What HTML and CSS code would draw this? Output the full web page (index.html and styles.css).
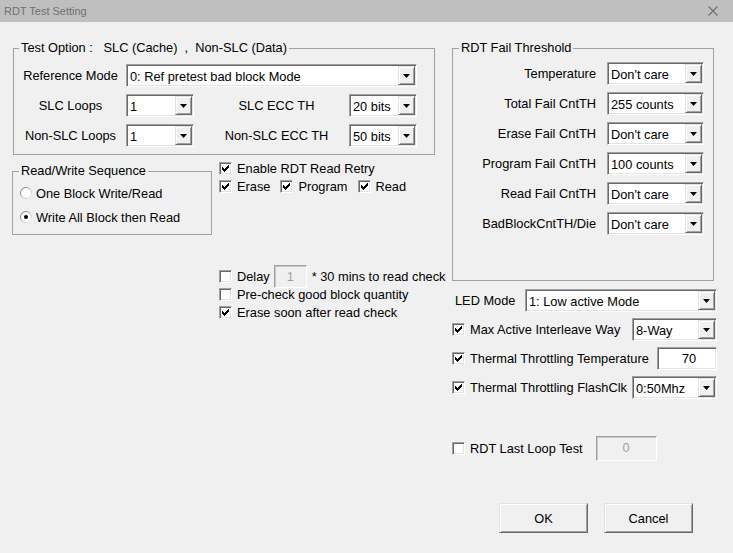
FILE: index.html
```html
<!DOCTYPE html>
<html>
<head>
<meta charset="utf-8">
<title>RDT Test Setting</title>
<link rel="stylesheet" href="styles.css">
</head>
<body>
<div class="titlebar">
  <span class="title">RDT Test Setting</span>
  <svg class="close" width="10" height="10" viewBox="0 0 10 10"><path d="M0.5 0.5L9.5 9.5M9.5 0.5L0.5 9.5" stroke="#6e6e6e" stroke-width="1.1" fill="none"/></svg>
</div>
<div class="body">
  <div class="left">
    <fieldset class="group testopt">
      <legend>Test Option :   SLC (Cache)  ,  Non-SLC (Data)</legend>
      <div class="opt-grid">
        <span class="lbl">Reference Mode</span>
        <div class="combo wide"><span class="val">0: Ref pretest bad block Mode</span><span class="dd"><svg width="7" height="4" viewBox="0 0 7 4"><path d="M0 0h7L3.5 4z" fill="#000"/></svg></span></div>
        <span class="lbl">SLC Loops</span>
        <div class="combo"><span class="val">1</span><span class="dd"><svg width="7" height="4" viewBox="0 0 7 4"><path d="M0 0h7L3.5 4z" fill="#000"/></svg></span></div>
        <span class="lbl lbl2">SLC ECC TH</span>
        <div class="combo"><span class="val">20 bits</span><span class="dd"><svg width="7" height="4" viewBox="0 0 7 4"><path d="M0 0h7L3.5 4z" fill="#000"/></svg></span></div>
        <span class="lbl">Non-SLC Loops</span>
        <div class="combo"><span class="val">1</span><span class="dd"><svg width="7" height="4" viewBox="0 0 7 4"><path d="M0 0h7L3.5 4z" fill="#000"/></svg></span></div>
        <span class="lbl lbl2">Non-SLC ECC TH</span>
        <div class="combo"><span class="val">50 bits</span><span class="dd"><svg width="7" height="4" viewBox="0 0 7 4"><path d="M0 0h7L3.5 4z" fill="#000"/></svg></span></div>
      </div>
    </fieldset>
    <div class="row2">
      <fieldset class="group rw">
        <legend>Read/Write Sequence</legend>
        <div class="radio">
          <svg width="12" height="12" viewBox="0 0 12 12"><defs><linearGradient id="rg" x1="0" y1="0" x2="1" y2="1"><stop offset="0" stop-color="#6a6a6a"/><stop offset="0.5" stop-color="#b0b0b0"/><stop offset="1" stop-color="#ffffff"/></linearGradient></defs><circle cx="6" cy="6" r="5.5" fill="#fff" stroke="url(#rg)" stroke-width="1"/></svg>
          <span>One Block Write/Read</span>
        </div>
        <div class="radio">
          <svg width="12" height="12" viewBox="0 0 12 12"><circle cx="6" cy="6" r="5.5" fill="#fff" stroke="url(#rg)" stroke-width="1"/><circle cx="6" cy="6" r="2" fill="#000"/></svg>
          <span>Write All Block then Read</span>
        </div>
      </fieldset>
      <div class="checks">
        <div class="chk"><span class="box"><svg width="7" height="7" viewBox="0 0 7 7" shape-rendering="crispEdges"><path d="M6 0h1v1h-1zM5 1h2v1h-2zM0 2h1v1h-1zM4 2h3v1h-3zM0 3h2v1h-2zM3 3h3v1h-3zM0 4h5v1h-5zM1 5h3v1h-3zM2 6h1v1h-1z" fill="#000"/></svg></span>Enable RDT Read Retry</div>
        <div class="chk-line">
          <div class="chk item"><span class="box"><svg width="7" height="7" viewBox="0 0 7 7" shape-rendering="crispEdges"><path d="M6 0h1v1h-1zM5 1h2v1h-2zM0 2h1v1h-1zM4 2h3v1h-3zM0 3h2v1h-2zM3 3h3v1h-3zM0 4h5v1h-5zM1 5h3v1h-3zM2 6h1v1h-1z" fill="#000"/></svg></span>Erase</div>
          <div class="chk item"><span class="box"><svg width="7" height="7" viewBox="0 0 7 7" shape-rendering="crispEdges"><path d="M6 0h1v1h-1zM5 1h2v1h-2zM0 2h1v1h-1zM4 2h3v1h-3zM0 3h2v1h-2zM3 3h3v1h-3zM0 4h5v1h-5zM1 5h3v1h-3zM2 6h1v1h-1z" fill="#000"/></svg></span>Program</div>
          <div class="chk item"><span class="box"><svg width="7" height="7" viewBox="0 0 7 7" shape-rendering="crispEdges"><path d="M6 0h1v1h-1zM5 1h2v1h-2zM0 2h1v1h-1zM4 2h3v1h-3zM0 3h2v1h-2zM3 3h3v1h-3zM0 4h5v1h-5zM1 5h3v1h-3zM2 6h1v1h-1z" fill="#000"/></svg></span>Read</div>
        </div>
        <div class="delay-block">
          <div class="chk"><span class="box"></span>Delay<span class="tinput dis delay">1</span>* 30 mins to read check</div>
          <div class="chk"><span class="box"></span>Pre-check good block quantity</div>
          <div class="chk"><span class="box"><svg width="7" height="7" viewBox="0 0 7 7" shape-rendering="crispEdges"><path d="M6 0h1v1h-1zM5 1h2v1h-2zM0 2h1v1h-1zM4 2h3v1h-3zM0 3h2v1h-2zM3 3h3v1h-3zM0 4h5v1h-5zM1 5h3v1h-3zM2 6h1v1h-1z" fill="#000"/></svg></span>Erase soon after read check</div>
        </div>
      </div>
    </div>
  </div>
  <div class="right">
    <fieldset class="group rdt">
      <legend>RDT Fail Threshold</legend>
      <div class="th-grid">
        <span class="rlbl">Temperature</span>
        <div class="combo"><span class="val">Don't care</span><span class="dd"><svg width="7" height="4" viewBox="0 0 7 4"><path d="M0 0h7L3.5 4z" fill="#000"/></svg></span></div>
        <span class="rlbl">Total Fail CntTH</span>
        <div class="combo"><span class="val">255 counts</span><span class="dd"><svg width="7" height="4" viewBox="0 0 7 4"><path d="M0 0h7L3.5 4z" fill="#000"/></svg></span></div>
        <span class="rlbl">Erase Fail CntTH</span>
        <div class="combo"><span class="val">Don't care</span><span class="dd"><svg width="7" height="4" viewBox="0 0 7 4"><path d="M0 0h7L3.5 4z" fill="#000"/></svg></span></div>
        <span class="rlbl">Program Fail CntTH</span>
        <div class="combo"><span class="val">100 counts</span><span class="dd"><svg width="7" height="4" viewBox="0 0 7 4"><path d="M0 0h7L3.5 4z" fill="#000"/></svg></span></div>
        <span class="rlbl">Read Fail CntTH</span>
        <div class="combo"><span class="val">Don't care</span><span class="dd"><svg width="7" height="4" viewBox="0 0 7 4"><path d="M0 0h7L3.5 4z" fill="#000"/></svg></span></div>
        <span class="rlbl">BadBlockCntTH/Die</span>
        <div class="combo"><span class="val">Don't care</span><span class="dd"><svg width="7" height="4" viewBox="0 0 7 4"><path d="M0 0h7L3.5 4z" fill="#000"/></svg></span></div>
      </div>
    </fieldset>
    <div class="led">
      <span>LED Mode</span>
      <div class="combo led-combo"><span class="val">1: Low active Mode</span><span class="dd"><svg width="7" height="4" viewBox="0 0 7 4"><path d="M0 0h7L3.5 4z" fill="#000"/></svg></span></div>
    </div>
    <div class="crow">
      <span class="box"><svg width="7" height="7" viewBox="0 0 7 7" shape-rendering="crispEdges"><path d="M6 0h1v1h-1zM5 1h2v1h-2zM0 2h1v1h-1zM4 2h3v1h-3zM0 3h2v1h-2zM3 3h3v1h-3zM0 4h5v1h-5zM1 5h3v1h-3zM2 6h1v1h-1z" fill="#000"/></svg></span>
      <span>Max Active Interleave Way</span>
      <div class="combo small"><span class="val">8-Way</span><span class="dd"><svg width="7" height="4" viewBox="0 0 7 4"><path d="M0 0h7L3.5 4z" fill="#000"/></svg></span></div>
    </div>
    <div class="crow">
      <span class="box"><svg width="7" height="7" viewBox="0 0 7 7" shape-rendering="crispEdges"><path d="M6 0h1v1h-1zM5 1h2v1h-2zM0 2h1v1h-1zM4 2h3v1h-3zM0 3h2v1h-2zM3 3h3v1h-3zM0 4h5v1h-5zM1 5h3v1h-3zM2 6h1v1h-1z" fill="#000"/></svg></span>
      <span>Thermal Throttling Temperature</span>
      <span class="tinput temp">70</span>
    </div>
    <div class="crow">
      <span class="box"><svg width="7" height="7" viewBox="0 0 7 7" shape-rendering="crispEdges"><path d="M6 0h1v1h-1zM5 1h2v1h-2zM0 2h1v1h-1zM4 2h3v1h-3zM0 3h2v1h-2zM3 3h3v1h-3zM0 4h5v1h-5zM1 5h3v1h-3zM2 6h1v1h-1z" fill="#000"/></svg></span>
      <span>Thermal Throttling FlashClk</span>
      <div class="combo small"><span class="val">0:50Mhz</span><span class="dd"><svg width="7" height="4" viewBox="0 0 7 4"><path d="M0 0h7L3.5 4z" fill="#000"/></svg></span></div>
    </div>
    <div class="crow last">
      <span class="box"></span>
      <span>RDT Last Loop Test</span>
      <span class="tinput dis lastin">0</span>
    </div>
    <div class="buttons">
      <div class="btn">OK</div>
      <div class="btn">Cancel</div>
    </div>
  </div>
</div>
</body>
</html>
```
FILE: styles.css
```css
* { box-sizing: border-box; }

body {
  margin: 0;
  width: 733px;
  height: 553px;
  overflow: hidden;
  background: #f0f0f0;
  font-family: "Liberation Sans", Arial, sans-serif;
  font-size: 12.8px;
  color: #000;
}

.titlebar {
  height: 22px;
  background: #bfbfbf;
  display: flex;
  align-items: center;
  justify-content: space-between;
  padding: 0 15px 0 4px;
}
.title {
  color: #707070;
  font-size: 11px;
}
.close { display: block; }

.body {
  display: flex;
  padding: 19px 0 0 12px;
}

.left {
  width: 440px;
  display: flex;
  flex-direction: column;
}

.group {
  margin: 0;
  border: 1px solid #a0a0a0;
  min-width: 0;
}
.group legend {
  padding: 0 2px;
  line-height: 14px;
  white-space: pre;
}

.testopt {
  margin-left: 1px;
  width: 422px;
  padding: 9px 17px 7px 5px;
}
.opt-grid {
  display: grid;
  grid-template-columns: 103px 68px 1fr 68px;
  grid-auto-rows: 23px;
  column-gap: 4px;
  row-gap: 7px;
}
.lbl {
  align-self: center;
  text-align: center;
  white-space: nowrap;
}
.lbl2 { padding-left: 10px; }
.wide { grid-column: 2 / 5; }

.combo {
  display: flex;
  align-items: stretch;
  height: 23px;
  background: #fff;
  border: 1px solid;
  border-color: #a0a0a0 #ffffff #ffffff #a0a0a0;
  box-shadow: inset 1px 1px 0 #696969, inset -1px -1px 0 #e3e3e3;
  padding: 1px;
  white-space: nowrap;
}
.combo .val {
  flex: 1;
  display: flex;
  align-items: center;
  padding-left: 2px;
  padding-top: 1px;
  overflow: hidden;
}
.dd {
  width: 17px;
  flex: none;
  display: flex;
  align-items: center;
  justify-content: center;
  background: #f0f0f0;
  border: 1px solid;
  border-color: #e3e3e3 #696969 #696969 #e3e3e3;
  box-shadow: inset 1px 1px 0 #ffffff, inset -1px -1px 0 #a0a0a0;
}
.dd svg { display: block; margin-top: 1px; }

.row2 {
  display: flex;
  margin-top: 4px;
}
.rw {
  width: 200px;
  margin-top: 5px;
  align-self: flex-start;
  padding: 6px 6px 8px 6px;
}
.radio {
  display: flex;
  align-items: center;
  gap: 4px;
  height: 18px;
  margin-left: 1px;
  white-space: nowrap;
}
.radio + .radio { margin-top: 6px; }
.radio svg { display: block; flex: none; }

.checks {
  margin-left: 7px;
  display: flex;
  flex-direction: column;
}
.chk {
  display: flex;
  align-items: center;
  height: 18px;
  white-space: nowrap;
}
.chk-line { display: flex; }
.chk-line .item { margin-right: 10px; }
.delay-block { margin-top: 72px; }

.box {
  width: 13px;
  height: 13px;
  flex: none;
  margin-right: 5px;
  background: #fff;
  border: 1px solid;
  border-color: #a0a0a0 #ffffff #ffffff #a0a0a0;
  box-shadow: inset 1px 1px 0 #696969, inset -1px -1px 0 #e3e3e3;
  display: flex;
  align-items: center;
  justify-content: center;
}
.box svg { display: block; }

.tinput {
  display: flex;
  align-items: center;
  justify-content: center;
  height: 23px;
  background: #fff;
  border: 1px solid;
  border-color: #a0a0a0 #ffffff #ffffff #a0a0a0;
  box-shadow: inset 1px 1px 0 #696969, inset -1px -1px 0 #e3e3e3;
  flex: none;
}
.tinput.dis {
  background: #f0f0f0;
  color: #a0a0a0;
  border-color: #a0a0a0 #ffffff #ffffff #a0a0a0;
  box-shadow: inset 1px 1px 0 #c8c8c8;
}
.delay {
  width: 33px;
  margin: 0 5px 0 4px;
}

.right {
  width: 265px;
  display: flex;
  flex-direction: column;
}
.rdt {
  width: 262px;
  height: 240px;
  padding: 7px 9px 0 6px;
}
.th-grid {
  display: grid;
  grid-template-columns: 1fr 97px;
  grid-auto-rows: 23px;
  column-gap: 11px;
  row-gap: 7px;
}
.rlbl {
  align-self: center;
  text-align: right;
  white-space: nowrap;
}

.led {
  display: flex;
  align-items: center;
  height: 23px;
  margin-top: 8px;
  padding-left: 3px;
}
.led-combo {
  margin-left: auto;
  width: 192px;
}

.crow {
  display: flex;
  align-items: center;
  height: 23px;
  margin-top: 6px;
  white-space: nowrap;
}
.small {
  margin-left: auto;
  width: 85px;
}
.temp {
  margin-left: auto;
  width: 60px;
  padding-left: 4px;
}
.last {
  margin-top: 37px;
  height: 25px;
}
.lastin {
  width: 61px;
  height: 25px;
  margin-left: 13px;
  align-items: flex-start;
  padding-top: 3px;
}

.buttons {
  display: flex;
  gap: 16px;
  margin-top: 42px;
  padding-left: 47px;
}
.btn {
  width: 89px;
  height: 30px;
  display: flex;
  align-items: center;
  justify-content: center;
  background: #f0f0f0;
  border: 1px solid;
  border-color: #e3e3e3 #696969 #696969 #e3e3e3;
  box-shadow: inset 1px 1px 0 #ffffff, inset -1px -1px 0 #a0a0a0;
}
```
